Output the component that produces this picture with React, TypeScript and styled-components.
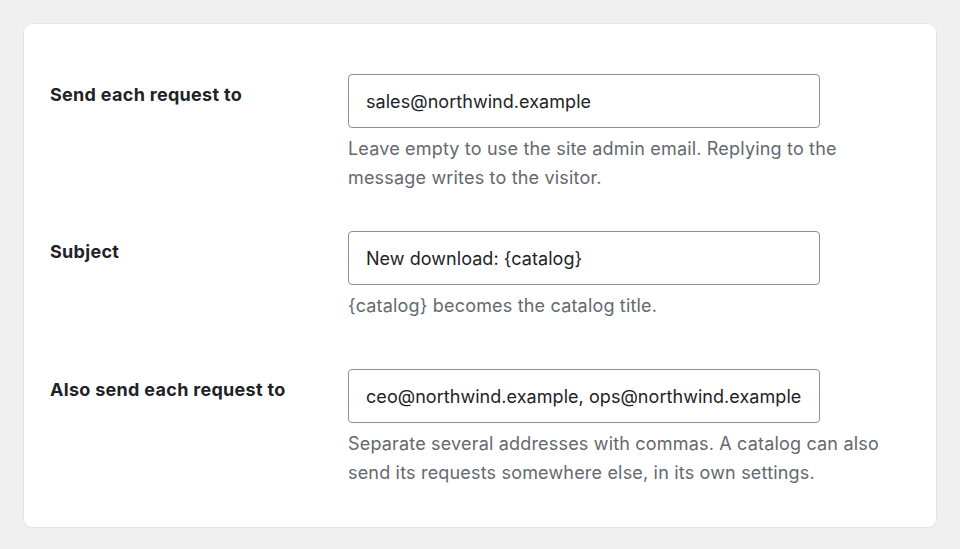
import styled, { createGlobalStyle } from "styled-components";

const GlobalStyle = createGlobalStyle`
    * {
        box-sizing: border-box;
    }
    body {
        margin: 0;
        background-color: #f0f0f1;
        font-family: Inter, "Noto Sans", "Liberation Sans", sans-serif;
        color: #1d2327;
    }
`;

const Card = styled.form`
    margin: 23px;
    padding: 50px 26px 40px;
    background-color: #ffffff;
    border: 1px solid #e4e4e6;
    border-radius: 9px;
    display: flex;
    flex-direction: column;
    gap: 39px;
`;

const Row = styled.div`
    display: grid;
    grid-template-columns: 298px 1fr;
    align-items: start;
`;

const Label = styled.label`
    padding-top: 8px;
    font-size: 18px;
    font-weight: 650;
    line-height: 25px;
    letter-spacing: 0.3px;
    color: #1d2327;
`;

const Field = styled.div`
    min-height: 99px;
    display: flex;
    flex-direction: column;
`;

const Input = styled.input`
    width: 472px;
    height: 54px;
    padding: 0 3px 0 17px;
    border: 1px solid #8c8f94;
    border-radius: 4px;
    background-color: #ffffff;
    font-family: inherit;
    font-size: 18px;
    letter-spacing: 0.05px;
    color: #1d2327;
    outline: none;
`;

const Description = styled.p`
    margin: 6px 0 0;
    max-width: 550px;
    font-size: 18px;
    line-height: 29px;
    letter-spacing: 0.18px;
    color: #646970;
`;

interface ISettingRowProps {
    id: string;
    label: string;
    value: string;
    description: string;
}

function SettingRow({ id, label, value, description }: ISettingRowProps) {
    return (
        <Row>
            <Label htmlFor={id}>{label}</Label>
            <Field>
                <Input id={id} type="text" defaultValue={value} />
                <Description>{description}</Description>
            </Field>
        </Row>
    );
}

const rows: ISettingRowProps[] = [
    {
        id: "notify-to",
        label: "Send each request to",
        value: "sales@northwind.example",
        description: "Leave empty to use the site admin email. Replying to the message writes to the visitor.",
    },
    {
        id: "notify-subject",
        label: "Subject",
        value: "New download: {catalog}",
        description: "{catalog} becomes the catalog title.",
    },
    {
        id: "notify-cc",
        label: "Also send each request to",
        value: "ceo@northwind.example, ops@northwind.example",
        description: "Separate several addresses with commas. A catalog can also send its requests somewhere else, in its own settings.",
    },
];

function App() {
    return (
        <>
            <GlobalStyle />
            <Card onSubmit={(e) => e.preventDefault()}>
                {rows.map((row) => (
                    <SettingRow key={row.id} {...row} />
                ))}
            </Card>
        </>
    );
}

export default App;
